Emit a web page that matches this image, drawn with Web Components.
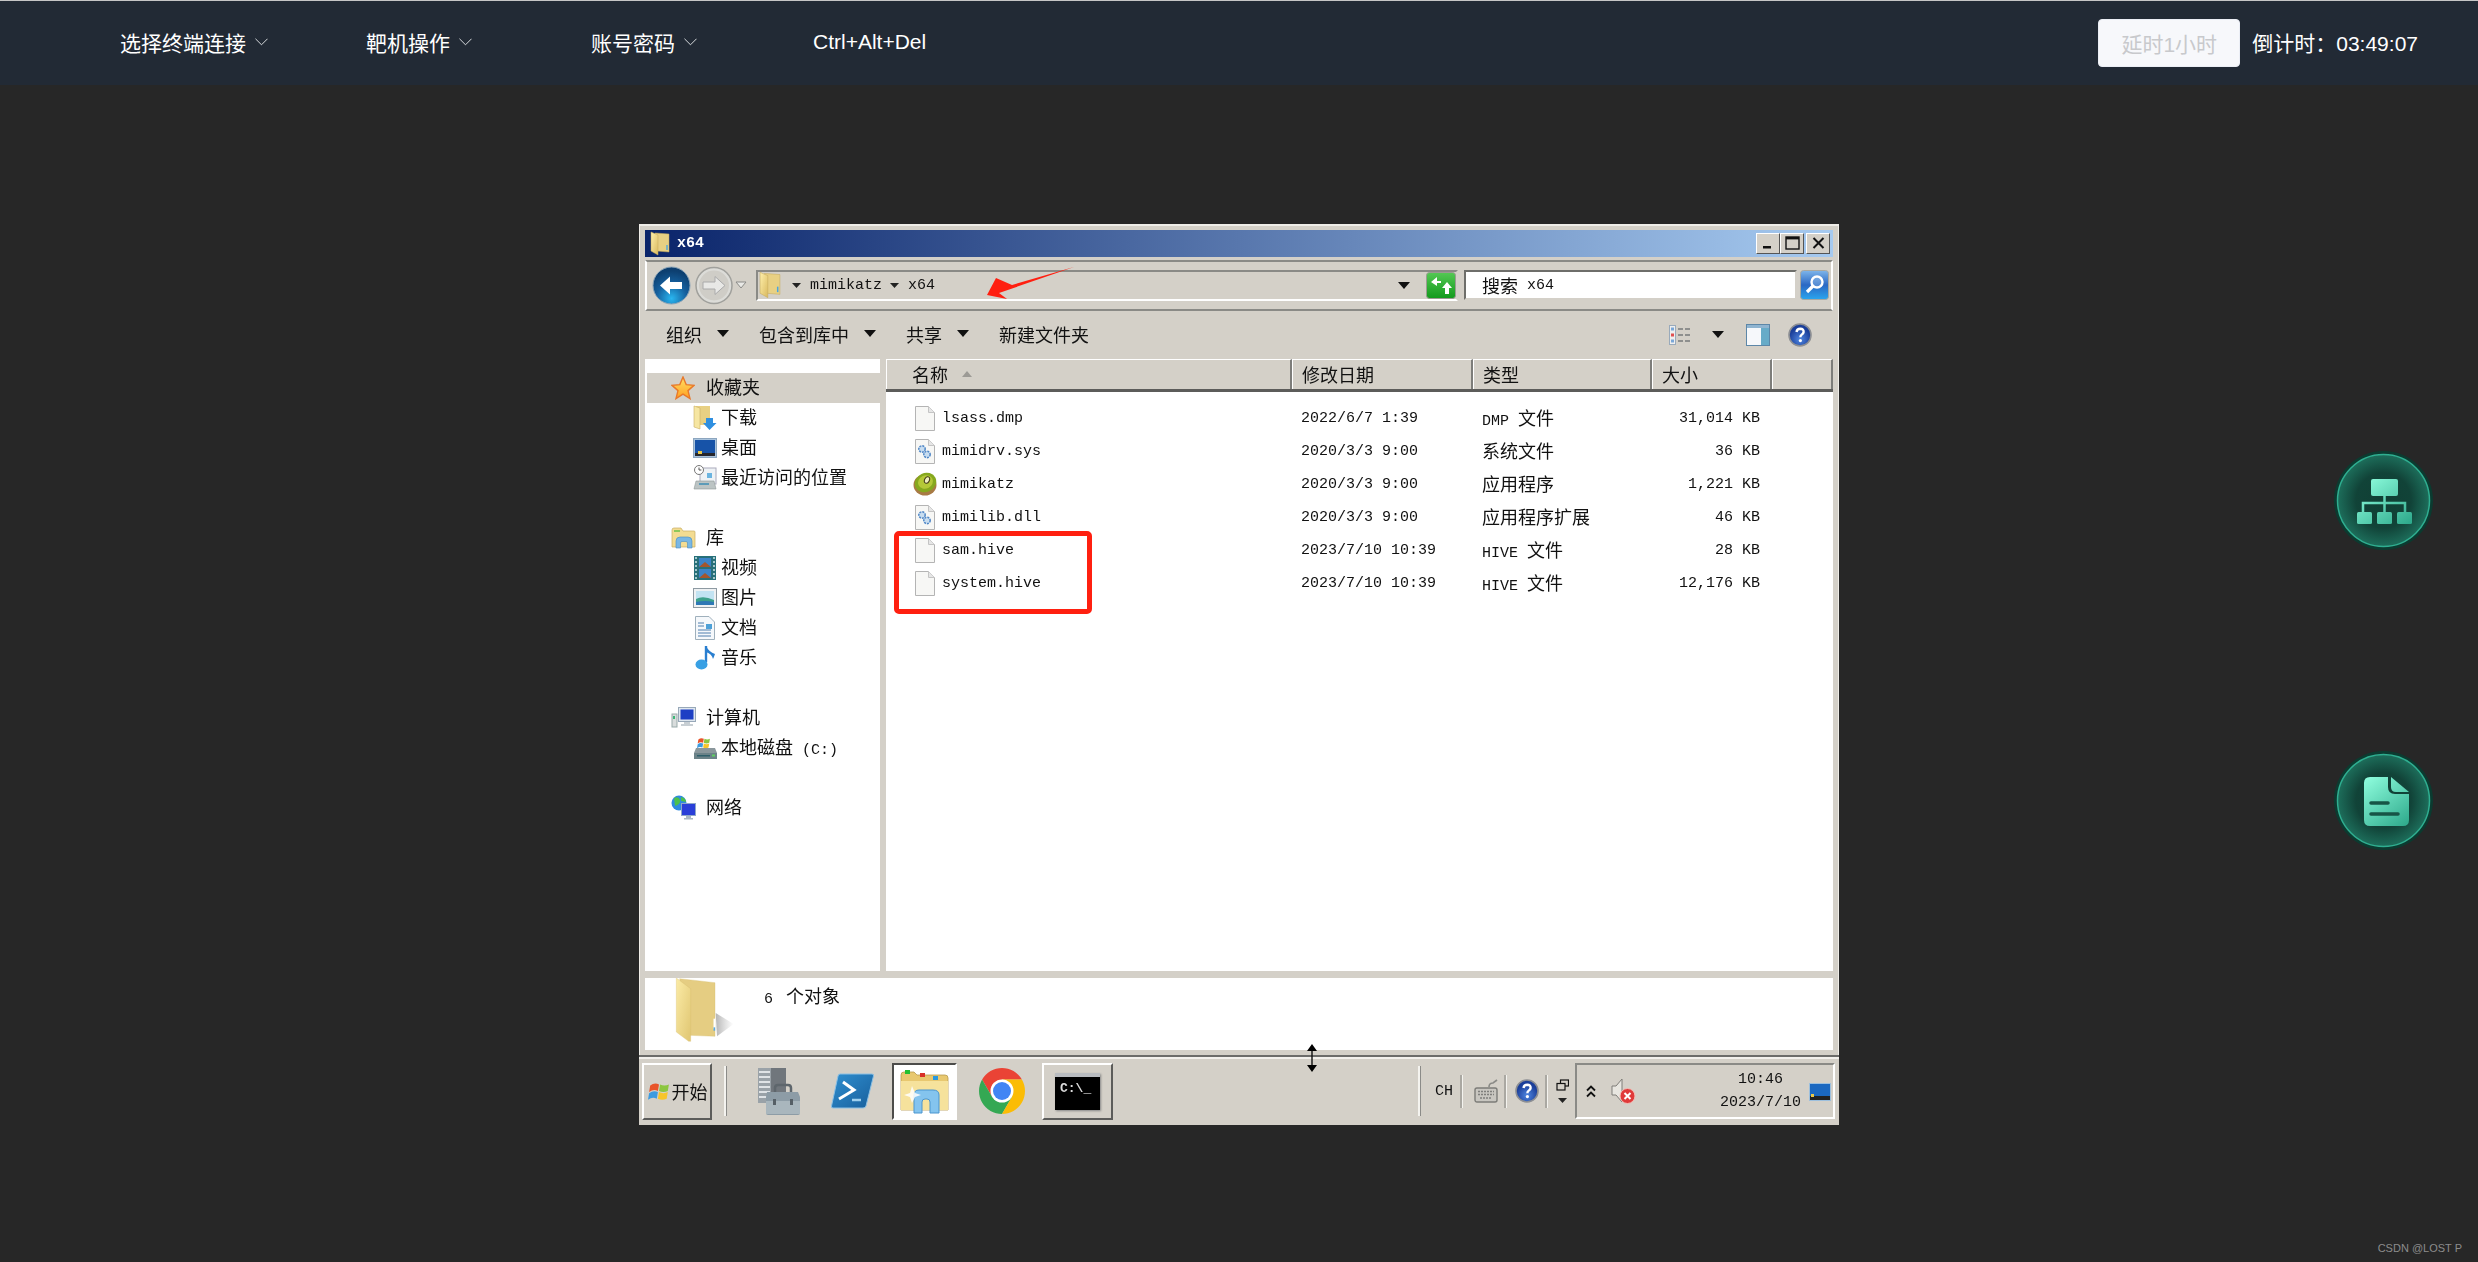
<!DOCTYPE html>
<html lang="zh">
<head>
<meta charset="utf-8">
<title>x64</title>
<style>
html, body { margin: 0; height: 100%; background: #272727; overflow: hidden; }
</style>
</head>
<body>
<lab-page></lab-page>
<script>
const FILE_PAGE = `<path d="M1.5 .5H14.5L20.5 6.5V24.5H1.5Z" fill="#f7f7f5" stroke="#b4b4b4"/><path d="M14.5 .5V6.5H20.5" fill="#e6e6e6" stroke="#c4c4c4"/>`;
const SMALL_FOLDER = `<defs><linearGradient id="fg" x1="0" x2="1" y1="0" y2="1"><stop offset="0" stop-color="#fff0ac"/><stop offset="1" stop-color="#d9b95e"/></linearGradient></defs>
	<path d="M5 2 L19 3 V21 L7 20Z" fill="#e8d083" stroke="#c7ab5c" stroke-width=".5"/>
	<path d="M1 1 L8 4 V24 L1 20Z" fill="url(#fg)" stroke="#c7ab5c" stroke-width=".5"/>
	<path d="M17 14v5" stroke="#4aa5dd" stroke-width="1.4"/>`;
const WIN_FLAG = `<path d="M2 5 Q6 2 10 4 L9 10 Q5 8 1 11Z" fill="#e8542a"/><path d="M11 4 Q15 6 19 4 L18 10 Q14 12 10 10Z" fill="#8cc63f"/><path d="M1 12 Q5 9 9 11 L8 17 Q4 15 0 18Z" fill="#3d9be0"/><path d="M10 11 Q14 13 18 11 L17 17 Q13 19 9 17Z" fill="#f8c52a"/>`;

const ICONS = {
	chevron: `<svg width="13" height="8" viewBox="0 0 14 8"><path d="M.5 .5 L7 7 L13.5 .5" fill="none" stroke="#e6e8ea" stroke-width="1"/></svg>`,
	titlefolder: `<svg width="20" height="25" viewBox="0 0 20 25">${SMALL_FOLDER}</svg>`,
	addrfolder: `<svg width="22" height="28" viewBox="0 0 20 25">${SMALL_FOLDER}</svg>`,
	back: `<svg width="39" height="39" viewBox="0 0 39 39"><defs><radialGradient id="b" cy=".85" r=".75"><stop offset="0" stop-color="#29b6f0"/><stop offset=".55" stop-color="#155f9d"/><stop offset="1" stop-color="#0d3f70"/></radialGradient></defs><circle cx="19.5" cy="19.5" r="18.5" fill="url(#b)" stroke="#8aa4b8"/><path d="M8 19.5 L18 10.5 V16 H30 V23 H18 V28.5Z" fill="#fff"/></svg>`,
	forward: `<svg width="38" height="39" viewBox="0 0 38 39"><circle cx="19" cy="19.5" r="18" fill="#dcdcd8" stroke="#a0a09c" stroke-width="1.5"/><circle cx="19" cy="19.5" r="15" fill="#cfcdc7"/><path d="M30 19.5 L20 10.5 V16 H8 V23 H20 V28.5Z" fill="#e8e8e6" stroke="#aaa"/></svg>`,
	navdrop: `<svg width="12" height="8" viewBox="0 0 12 8"><path d="M1 1H11L6 7Z" fill="#e9e9e6" stroke="#8b8b88"/></svg>`,
	arrow: `<svg width="12" height="7" viewBox="0 0 12 7"><path d="M0 0H12L6 7Z" fill="#111"/></svg>`,
	crumb: `<svg width="9" height="5" viewBox="0 0 9 5"><path d="M0 0H9L4.5 5Z" fill="#222"/></svg>`,
	sort: `<svg width="10" height="6" viewBox="0 0 10 6"><path d="M0 6H10L5 0Z" fill="#9c9a95"/></svg>`,
	refresh: `<svg width="30" height="27" viewBox="0 0 30 27"><defs><linearGradient id="g" x2="0" y2="1"><stop offset="0" stop-color="#54c854"/><stop offset="1" stop-color="#129a1c"/></linearGradient></defs><rect x=".5" y=".5" width="29" height="26" rx="3" fill="url(#g)" stroke="#9b9b92"/><path d="M11 5 L5 10 L11 14 V11 H15 V9 H11Z M19 22 V16 H16 L21 10 L26 16 H23 V22Z" fill="#fff"/></svg>`,
	search: `<svg width="29" height="30" viewBox="0 0 29 30"><defs><linearGradient id="s" x2="0" y2="1"><stop offset="0" stop-color="#7fb6ea"/><stop offset=".5" stop-color="#2a68c4"/><stop offset="1" stop-color="#2aa6ee"/></linearGradient></defs><rect x=".5" y=".5" width="28" height="29" rx="3" fill="url(#s)" stroke="#a8a8a0"/><circle cx="17" cy="12" r="5.5" fill="#bfe0f7" fill-opacity=".3" stroke="#fff" stroke-width="2.4"/><path d="M13 16 L7 22" stroke="#fff" stroke-width="3.2"/></svg>`,
	views: `<svg width="22" height="20" viewBox="0 0 22 20"><rect x=".5" y=".5" width="6" height="19" fill="#efefef" stroke="#9ab"/><rect x="2" y="2.5" width="3" height="3" fill="#7aa7d8"/><rect x="2" y="8.5" width="3" height="3" fill="#e05050"/><rect x="2" y="14.5" width="3" height="3" fill="#7aa7d8"/><path d="M9 4h5M16 4h5M9 10h5M16 10h5M9 16h5M16 16h5" stroke="#77797b" stroke-width="1.4"/></svg>`,
	pane: `<svg width="24" height="22" viewBox="0 0 24 22"><rect x=".5" y=".5" width="23" height="21" fill="#f6f8fb" stroke="#5d87a8"/><rect x="1" y="1" width="22" height="3" fill="#8fb4d0"/><rect x="15" y="4" width="8" height="17" fill="#67abc8"/></svg>`,
	help: `<svg width="24" height="24" viewBox="0 0 24 24"><defs><radialGradient id="h" cy=".7"><stop offset="0" stop-color="#4f86e0"/><stop offset="1" stop-color="#1b3f9a"/></radialGradient></defs><circle cx="12" cy="12" r="11" fill="url(#h)" stroke="#8d8f93" stroke-width="1.6"/><path d="M8.5 9 Q9 5.8 12.3 5.8 Q15.8 6 15.6 9 Q15.4 10.8 13.6 11.8 Q12.4 12.5 12.4 14.2" fill="none" stroke="#fff" stroke-width="2.4"/><circle cx="12.4" cy="17.6" r="1.6" fill="#fff"/></svg>`,
	min: `<svg width="12" height="12" viewBox="0 0 12 12"><rect x="1" y="9" width="8" height="2.5" fill="#111"/></svg>`,
	max: `<svg width="15" height="14" viewBox="0 0 15 14"><rect x="1" y="1" width="13" height="12" fill="none" stroke="#111" stroke-width="1.4"/><rect x="1" y="1" width="13" height="2.4" fill="#111"/></svg>`,
	close: `<svg width="13" height="12" viewBox="0 0 13 12"><path d="M1.5 1 L11.5 11 M11.5 1 L1.5 11" stroke="#111" stroke-width="2"/></svg>`,
	star: `<svg width="24" height="24" viewBox="0 0 24 24"><defs><linearGradient id="st" x2="0" y2="1"><stop offset="0" stop-color="#ffe066"/><stop offset="1" stop-color="#ffa020"/></linearGradient></defs><path d="M12 1 L15.2 8.6 L23 9.4 L17 14.6 L19 22.6 L12 18.2 L5 22.6 L7 14.6 L1 9.4 L8.8 8.6Z" fill="url(#st)" stroke="#e8782a" stroke-width="1.4"/></svg>`,
	download: `<svg width="24" height="25" viewBox="0 0 24 25"><path d="M3 1H17V20H3Z" fill="#e8d083"/><path d="M1 1L7 3V24L1 22Z" fill="#f6e6a2" stroke="#cbb064" stroke-width=".6"/><path d="M13 13H20V18H23.5L16.5 25L10 18H13Z" fill="#2f8fe0"/></svg>`,
	desktop: `<svg width="24" height="20" viewBox="0 0 24 20"><rect x=".5" y=".5" width="23" height="19" fill="#a9c3dd" stroke="#8da6bf"/><rect x="2" y="2" width="20" height="16" fill="#1753a8"/><rect x="2" y="15" width="20" height="3" fill="#26262c"/><rect x="5" y="13" width="4" height="3" fill="#e8c84a"/></svg>`,
	recent: `<svg width="24" height="25" viewBox="0 0 24 25"><rect x="7" y="3" width="16" height="16" fill="#eef2f5" stroke="#aab"/><rect x="14" y="8" width="5" height="5" fill="#6bb4e0"/><circle cx="6" cy="5" r="4.5" fill="#fff" stroke="#777"/><path d="M6 2.5V5H8.4" fill="none" stroke="#555"/><path d="M3 16H21L23 24H1Z" fill="#bcc4c4" stroke="#8f9898" stroke-width=".6"/><rect x="6" y="18" width="10" height="2" fill="#5c9bb8"/></svg>`,
	library: `<svg width="25" height="22" viewBox="0 0 25 22"><path d="M1 3 Q1 1 3 1H10L12 4H23Q24 4 24 5V20H1Z" fill="#f3dc92" stroke="#c8ad62" stroke-width=".7"/><rect x="3" y="3" width="6" height="2" fill="#8ec85a"/><path d="M5 21V14Q5 10 9 10H17Q21 10 21 14V21H16.5V16Q16.5 14.5 15 14.5H11Q9.5 14.5 9.5 16V21Z" fill="#79b7e4" stroke="#4a8dc1" stroke-width=".6"/></svg>`,
	video: `<svg width="22" height="24" viewBox="0 0 22 24"><rect width="22" height="24" fill="#27707a"/><path d="M1 2h2M1 6h2M1 10h2M1 14h2M1 18h2M1 22h2M19 2h2M19 6h2M19 10h2M19 14h2M19 18h2M19 22h2" stroke="#cfe5e8" stroke-width="1.6"/><rect x="5" y="2" width="12" height="9" fill="#3c83c8"/><rect x="5" y="13" width="12" height="9" fill="#3c83c8"/><path d="M5 11L11 6L17 11ZM5 22L11 17L17 22Z" fill="#a5562c"/></svg>`,
	picture: `<svg width="24" height="20" viewBox="0 0 24 20"><rect x=".5" y=".5" width="23" height="19" fill="#eef1f3" stroke="#8e9aa2"/><rect x="3" y="3" width="18" height="14" fill="#c2e3f2"/><path d="M3 11 Q10 7 21 12V17H3Z" fill="#3ea18b"/><path d="M3 14 Q12 12 21 14V17H3Z" fill="#2f78b5"/></svg>`,
	document: `<svg width="20" height="24" viewBox="0 0 20 24"><path d="M.5 .5H14L19.5 6V23.5H.5Z" fill="#f5f8fb" stroke="#9fb0bc"/><path d="M3 7h6M3 10h6M3 14h13M3 17h13M3 20h13" stroke="#4f7fae"/><rect x="11" y="8" width="6" height="5" fill="#4ea1d8"/></svg>`,
	music: `<svg width="21" height="25" viewBox="0 0 21 25"><path d="M11 1V17" stroke="#2a7fd0" stroke-width="2.4"/><path d="M11 1 Q14 7 20 9 Q19 12 18 14 Q17 9 11 7Z" fill="#2a7fd0"/><ellipse cx="6.5" cy="19.5" rx="6" ry="5" fill="#38a0e4"/></svg>`,
	computer: `<svg width="25" height="21" viewBox="0 0 25 21"><rect x="1" y="7" width="5" height="13" fill="#d8dcdc" stroke="#9aa"/><rect x="2" y="9" width="2" height="3" fill="#3cb878"/><rect x="7.5" y=".5" width="17" height="14" fill="#dfe7ef" stroke="#98a8b8"/><rect x="9.5" y="2.5" width="13" height="10" fill="#1d3fc4"/><path d="M13 15h6v2h3v2H10v-2h3Z" fill="#c8cfd4"/></svg>`,
	disk: `<svg width="25" height="24" viewBox="0 0 25 24"><g transform="translate(4 0) scale(.68)">${WIN_FLAG}</g><path d="M3 12H22L24 17V23H1V17Z" fill="#8a979c"/><rect x="1" y="17" width="23" height="6" fill="#6b8288"/><rect x="4" y="19" width="13" height="1.5" fill="#2f5f6a"/><rect x="19" y="18.5" width="3" height="2" fill="#5fd05f"/></svg>`,
	network: `<svg width="25" height="25" viewBox="0 0 25 25"><circle cx="8" cy="8" r="7.5" fill="#2f8ae0"/><path d="M3 3Q8 1 9 5T4 11ZM10 2Q15 3 15 7L10 6Z" fill="#4cc04c"/><rect x="10.5" y="8.5" width="14" height="12" fill="#2a3fd8" stroke="#8fa8c8"/><path d="M15 21h5v2h2v1.5h-9V23h2Z" fill="#aab8c4"/></svg>`,
	file: `<svg width="22" height="25" viewBox="0 0 22 25">${FILE_PAGE}</svg>`,
	sysfile: `<svg width="22" height="25" viewBox="0 0 22 25">${FILE_PAGE}<circle cx="8" cy="10" r="3.2" fill="#c8ddf0" stroke="#4f86c6" stroke-width="1.5" stroke-dasharray="2 1"/><circle cx="13" cy="15.5" r="3.2" fill="#c8ddf0" stroke="#4f86c6" stroke-width="1.5" stroke-dasharray="2 1"/></svg>`,
	kiwi: `<svg width="24" height="24" viewBox="0 0 24 24"><ellipse cx="12" cy="13" rx="11.5" ry="10.5" fill="#a87a45"/><ellipse cx="12.5" cy="10.5" rx="11" ry="9.5" transform="rotate(-25 12.5 10.5)" fill="#86a81e"/><ellipse cx="12.5" cy="10" rx="7.6" ry="6.6" transform="rotate(-25 12.5 10)" fill="#b4c838"/><ellipse cx="14" cy="8" rx="2.4" ry="3.4" transform="rotate(25 14 8)" fill="#f0efc0" stroke="#3d3418"/></svg>`,
	bigfolder: `<svg width="64" height="65" viewBox="130 60 192 195"><defs><linearGradient id="bf" x1="0" x2="1" y1="0" y2="1"><stop offset="0" stop-color="#fbeba6"/><stop offset="1" stop-color="#e0c672"/></linearGradient><linearGradient id="bs" x2="1"><stop offset="0" stop-color="#777" stop-opacity=".55"/><stop offset="1" stop-color="#999" stop-opacity="0"/></linearGradient></defs><path d="M258 165 L312 198 L262 235Z" fill="url(#bs)"/><path d="M150 62 L256 74 V235 L180 232Z" fill="#e5cd82" stroke="#d6bc6c"/><path d="M140 60 L183 92 V250 L177 250 L140 222Z" fill="url(#bf)" stroke="#d6bc6c"/><path d="M254 182v32" stroke="#fff" stroke-width="5"/><path d="M254 208v10" stroke="#5aa9df" stroke-width="5"/></svg>`,
	startflag: `<svg width="24" height="22" viewBox="0 0 20 20">${WIN_FLAG}</svg>`,
	server: `<svg width="43" height="49" viewBox="0 0 43 49"><path d="M1 1H29V36H1Z" fill="#9aa2a8"/><path d="M14 1H29V36H14Z" fill="#70767c"/><path d="M2 5h11M2 10h11M2 15h11M2 20h11M2 25h11M2 30h11" stroke="#dfe3e6" stroke-width="2"/><path d="M10 25H41L43 30V46Q43 48 41 48H11Q9 48 9 46V30Z" fill="#8d9ca6"/><path d="M9 34H43V47H9Z" fill="#a9b6bd"/><path d="M18 25 V21 Q18 18 21 18 H31 Q34 18 34 21 V25" fill="none" stroke="#5e666c" stroke-width="2.5"/><rect x="16" y="32" width="3" height="6" fill="#565f66"/><rect x="33" y="32" width="3" height="6" fill="#565f66"/></svg>`,
	powershell: `<svg width="43" height="36" viewBox="0 0 43 36"><defs><linearGradient id="p" x2="1" y2="1"><stop offset="0" stop-color="#2f8fd0"/><stop offset="1" stop-color="#185f9c"/></linearGradient></defs><path d="M9 1H41Q43 1 42.5 3L35 33Q34.5 35 32 35H2Q0 35 .5 33L7 3Q7.5 1 9 1Z" fill="url(#p)" stroke="#8cc0e4"/><path d="M12 9L23 17L8 26" fill="none" stroke="#fff" stroke-width="3"/><path d="M21 27H30" stroke="#9fd0ee" stroke-width="2.5"/></svg>`,
	explorer: `<svg width="49" height="45" viewBox="0 0 49 45"><path d="M1 6Q1 3 4 3H14L17 6H45Q48 6 48 9V41H1Z" fill="#e8c870" stroke="#b79a4e" stroke-width=".8"/><rect x="5" y="1" width="5" height="4" fill="#22c030"/><rect x="20" y="4" width="5" height="4" fill="#d83028"/><rect x="33" y="7" width="5" height="4" fill="#2898e0"/><path d="M1 12H48V41H1Z" fill="#f6e29c"/><path d="M14 44V26Q14 21 19 21H33Q39 21 39 26V44H30V33Q30 30 27 30H25Q22 30 22 33V44Z" fill="#84c4ee" stroke="#4a95cf"/><path d="M12 17L15 24L21 26L15 28L12 34L10 28L4 26L10 24Z" fill="#fff" fill-opacity=".85"/></svg>`,
	chrome: `<svg width="46" height="46" viewBox="1 1 46 46"><path d="M24 12.5H43.9A23 23 0 0 0 4.1 12.5L14 29.75Z" fill="#ea4335"/><path d="M14 29.75L4.1 12.5A23 23 0 0 0 24 47L34 29.75Z" fill="#34a853"/><path d="M34 29.75L24 47A23 23 0 0 0 43.9 12.5H24Z" fill="#fbbc05"/><circle cx="24" cy="24" r="11.5" fill="#fff"/><circle cx="24" cy="24" r="9" fill="#4285f4"/></svg>`,
	keyboard: `<svg width="24" height="24" viewBox="0 0 24 24"><path d="M15 8 Q15 4 19 4 L23 1" fill="none" stroke="#8a8a86" stroke-width="1.6"/><rect x="1" y="9" width="22" height="14" rx="2" fill="#c8c6c0" stroke="#7c7c78" stroke-width="1.4"/><path d="M4 12.500h16M4 15.500h16M6 19h12" stroke="#7f7f7c" stroke-width="1.6" stroke-dasharray="2 1"/></svg>`,
	restore: `<svg width="13" height="12" viewBox="0 0 13 12"><rect x="4.500" y="1" width="8" height="6" fill="#d4d0c8" stroke="#111" stroke-width="1.2"/><rect x="1" y="4.500" width="8" height="6.500" fill="#d4d0c8" stroke="#111" stroke-width="1.2"/></svg>`,
	trayup: `<svg width="10" height="13" viewBox="0 0 10 13"><path d="M1 5.500L5 1.500L9 5.500M1 11.500L5 7.500L9 11.500" fill="none" stroke="#111" stroke-width="1.8"/></svg>`,
	speaker: `<svg width="26" height="27" viewBox="0 0 26 27"><path d="M1 8H5L11 1V24L5 17H1Z" fill="#e8e6e0" stroke="#7f7d78"/><circle cx="16.500" cy="18" r="7.500" fill="#e03a3a" stroke="#f3c0b8"/><path d="M13.500 15L19.500 21M19.500 15L13.500 21" stroke="#fff" stroke-width="2"/></svg>`,
	showdesk: `<svg width="22" height="18" viewBox="0 0 22 18"><rect width="22" height="18" fill="#9dc0de"/><rect x="1" y="1" width="20" height="16" fill="#1b68c0"/><rect x="1" y="13" width="20" height="4" fill="#222"/><rect x="2" y="11" width="3" height="3" fill="#e8c84a"/></svg>`,
	resize: `<svg width="12" height="30" viewBox="0 0 12 30"><path d="M6 4V26" stroke="#111" stroke-width="1.4"/><path d="M1 8L6 1L11 8ZM1 22L6 29L11 22Z" fill="#000"/></svg>`,
	redarrow: `<svg width="90" height="35" viewBox="0 0 90 35"><path d="M89 1L27 19L11 12L2 29L22 33L14 27Z" fill="#ff1f10"/></svg>`,
};

class Shadowed extends HTMLElement {
	constructor() {
		super();
		this.attachShadow({ mode: "open" });
		this.shadowRoot.innerHTML = this.constructor.html || '';
	}
}

// latin runs are a bitmap-ish half width font in the remote desktop, cjk stays 18px
function mix(text) {
	return text.replace(/[\x20-\x7e]+/g, m => `<span style="font:15px 'Liberation Mono',monospace">${m}</span>`);
}

class WinIcon extends Shadowed {
	connectedCallback() {
		this.shadowRoot.innerHTML = `<style>:host{display:inline-flex;flex:none;line-height:0}</style>` + (ICONS[this.getAttribute('name')] || '');
	}
}
customElements.define('win-icon', WinIcon);

class NavItem extends Shadowed {
	static html = `<style>
:host { display: flex; align-items: center; gap: 9px; color: #fff; font: 21px "Liberation Sans", "Noto Sans CJK SC", sans-serif; white-space: nowrap; }
</style><slot></slot><win-icon name="chevron"></win-icon>`;
}
customElements.define('nav-item', NavItem);

class TopBar extends Shadowed {
	static html = `<style>
:host { display: flex; align-items: center; box-sizing: border-box; height: 85px; padding: 0 60px 2px 120px; background: #222a35; border-top: 1px solid #c6c6c6; color: #fff; font: 21px "Liberation Sans", "Noto Sans CJK SC", sans-serif; }
#menu { display: grid; grid-template-columns: 246px 225px 222px auto; align-items: center; }
#right { display: flex; align-items: center; gap: 12px; margin-left: auto; }
button { width: 142px; height: 48px; margin-top: 2px; padding: 0; border: 1px solid #ebeef5; border-radius: 4px; background: #f7f8fb; color: #c8c9cc; font: inherit; }
</style>
<div id="menu">
	<nav-item>选择终端连接</nav-item>
	<nav-item>靶机操作</nav-item>
	<nav-item>账号密码</nav-item>
	<span>Ctrl+Alt+Del</span>
</div>
<div id="right"><button disabled>延时1小时</button><span>倒计时：03:49:07</span></div>`;
}
customElements.define('top-bar', TopBar);

class TitleBar extends Shadowed {
	static html = `<style>
:host { display: flex; align-items: center; height: 27px; padding: 0 3px 0 5px; background: linear-gradient(90deg, #0a246a, #a6caf0); }
#title { margin-left: 7px; color: #fff; font: bold 15px "Liberation Mono", monospace; }
#btns { display: flex; margin-left: auto; }
.b { display: flex; align-items: center; justify-content: center; box-sizing: border-box; width: 24px; height: 21px; background: #d4d0c8; border: 1px solid; border-color: #fff #555 #555 #fff; }
.b:last-child { margin-left: 2px; }
</style>
<win-icon name="titlefolder"></win-icon><span id="title">x64</span>
<div id="btns"><div class="b"><win-icon name="min"></win-icon></div><div class="b"><win-icon name="max"></win-icon></div><div class="b"><win-icon name="close"></win-icon></div></div>`;
}
customElements.define('title-bar', TitleBar);

class AddressBar extends Shadowed {
	static html = `<style>
:host { display: flex; align-items: center; box-sizing: border-box; height: 51px; background: #d4d0c8; border: 2px solid; border-color: #8a8a86 #fff #8a8a86 #fff; font: 18px "Noto Sans CJK SC", sans-serif; color: #111; }
#cluster { display: flex; align-items: center; width: 109px; padding-left: 5px; box-sizing: border-box; }
#forward { margin-left: 4px; }
#cluster win-icon[name=navdrop] { margin-left: 2px; }
#addr { display: flex; align-items: center; box-sizing: border-box; width: 702px; height: 31px; border: 2px solid; border-color: #8a8a86 #d4d0c8 #fff #8a8a86; font: 15px "Liberation Mono", monospace; }
#addr .crumb { margin: 0 9px 0 0; }
#addr > win-icon[name=addrfolder] { margin: 0 11px 0 1px; }
#drop { margin-left: auto; margin-right: 16px; }
#search { display: flex; align-items: center; box-sizing: border-box; width: 333px; height: 30px; margin-left: 6px; padding-left: 16px; background: #fff; border: 2px solid; border-color: #6e6e6a #d4d0c8 #d4d0c8 #6e6e6a; white-space: pre; }
#sbtn { margin-left: 3px; }
</style>
<div id="cluster"><win-icon name="back"></win-icon><win-icon id="forward" name="forward"></win-icon><win-icon name="navdrop"></win-icon></div>
<div id="addr"><win-icon name="addrfolder"></win-icon><win-icon name="crumb" class="crumb"></win-icon>mimikatz<win-icon name="crumb" class="crumb" style="margin-left:8px"></win-icon>x64<win-icon id="drop" name="arrow"></win-icon><win-icon name="refresh"></win-icon></div>
<div id="search"></div><win-icon id="sbtn" name="search"></win-icon>`;
	connectedCallback() {
		this.shadowRoot.querySelector('#search').innerHTML = mix('搜索 x64');
	}
}
customElements.define('address-bar', AddressBar);

class CommandBar extends Shadowed {
	static html = `<style>
:host { display: flex; align-items: center; height: 48px; padding: 0 21px; background: #d4d0c8; color: #111; font: 18px "Noto Sans CJK SC", sans-serif; }
#cmds { display: flex; align-items: center; gap: 30px; margin-top: -2px; }
.c { display: flex; align-items: center; gap: 15px; }
#tools { display: flex; align-items: center; margin-left: auto; }
</style>
<div id="cmds">
	<div class="c">组织<win-icon name="arrow"></win-icon></div>
	<div class="c">包含到库中<win-icon name="arrow"></win-icon></div>
	<div class="c">共享<win-icon name="arrow"></win-icon></div>
	<div class="c">新建文件夹</div>
</div>
<div id="tools">
	<win-icon name="views"></win-icon>
	<win-icon name="arrow" style="margin-left:21px"></win-icon>
	<win-icon name="pane" style="margin-left:22px"></win-icon>
	<win-icon name="help" style="margin-left:18px"></win-icon>
</div>`;
}
customElements.define('command-bar', CommandBar);

class NavRow extends Shadowed {
	connectedCallback() {
		const sub = this.hasAttribute('sub');
		const on = this.hasAttribute('selected');
		this.shadowRoot.innerHTML = `<style>
:host { display: flex; align-items: center; height: 30px; box-sizing: border-box; padding-left: ${sub ? 45 : 20}px; background: ${on ? '#d4d0c8' : 'transparent'}; margin-left: 2px; }
#i { display: flex; justify-content: center; width: ${sub ? 26 : 32}px; flex: none; }
#t { margin: -3px 0 0 ${sub ? 3 : 7}px; color: #111; font: 18px "Noto Sans CJK SC", sans-serif; white-space: pre; }
</style><div id="i"><win-icon name="${this.getAttribute('icon')}"></win-icon></div><div id="t">${mix(this.getAttribute('label'))}</div>`;
	}
}
customElements.define('nav-row', NavRow);

class NavPane extends Shadowed {
	static html = `<style>
:host { display: block; box-sizing: border-box; width: 235px; padding-top: 14px; background: #fff; }
.group { margin-bottom: 30px; }
</style>
<div class="group">
	<nav-row icon="star" label="收藏夹" selected></nav-row>
	<nav-row icon="download" label="下载" sub></nav-row>
	<nav-row icon="desktop" label="桌面" sub></nav-row>
	<nav-row icon="recent" label="最近访问的位置" sub></nav-row>
</div>
<div class="group">
	<nav-row icon="library" label="库"></nav-row>
	<nav-row icon="video" label="视频" sub></nav-row>
	<nav-row icon="picture" label="图片" sub></nav-row>
	<nav-row icon="document" label="文档" sub></nav-row>
	<nav-row icon="music" label="音乐" sub></nav-row>
</div>
<div class="group">
	<nav-row icon="computer" label="计算机"></nav-row>
	<nav-row icon="disk" label="本地磁盘 (C:)" sub></nav-row>
</div>
<nav-row icon="network" label="网络"></nav-row>`;
}
customElements.define('nav-pane', NavPane);

class FileRow extends Shadowed {
	connectedCallback() {
		const a = n => this.getAttribute(n);
		this.shadowRoot.innerHTML = `<style>
:host { display: grid; grid-template-columns: 415px 181px 178px 100px; align-items: center; height: 33px; color: #111; font: 18px "Noto Sans CJK SC", sans-serif; white-space: pre; }
div { display: flex; align-items: center; }
#n { padding-left: 28px; }
#ic { justify-content: center; width: 22px; margin-right: 6px; }
#s { justify-content: flex-end; }
#k { align-items: baseline; margin-top: -2px; }
</style><div id="n"><div id="ic"><win-icon name="${a('icon')}"></win-icon></div>${mix(a('name'))}</div><div>${mix(a('date'))}</div><div id="k">${mix(a('kind'))}</div><div id="s">${mix(a('size'))}</div>`;
	}
}
customElements.define('file-row', FileRow);

class FileList extends Shadowed {
	static html = `<style>
:host { display: flex; flex-direction: column; flex: 1; background: #fff; }
#head { display: grid; grid-template-columns: 406px 181px 179px 120px 1fr; box-sizing: border-box; height: 33px; background: #d4d0c8; border-bottom: 3px solid #5c5c5a; color: #111; font: 18px "Noto Sans CJK SC", sans-serif; }
#head div { display: flex; align-items: center; gap: 14px; padding-left: 9px; border-top: 1px solid #fff; border-left: 1px solid #fff; border-right: 2px solid #7d7d7a; }
#head div:first-child { padding-left: 25px; }
#rows { padding-top: 10px; }
</style>
<div id="head">
	<div>名称<win-icon name="sort"></win-icon></div><div>修改日期</div><div>类型</div><div>大小</div><div></div>
</div>
<div id="rows">
	<file-row icon="file" name="lsass.dmp" date="2022/6/7 1:39" kind="DMP 文件" size="31,014 KB"></file-row>
	<file-row icon="sysfile" name="mimidrv.sys" date="2020/3/3 9:00" kind="系统文件" size="36 KB"></file-row>
	<file-row icon="kiwi" name="mimikatz" date="2020/3/3 9:00" kind="应用程序" size="1,221 KB"></file-row>
	<file-row icon="sysfile" name="mimilib.dll" date="2020/3/3 9:00" kind="应用程序扩展" size="46 KB"></file-row>
	<file-row icon="file" name="sam.hive" date="2023/7/10 10:39" kind="HIVE 文件" size="28 KB"></file-row>
	<file-row icon="file" name="system.hive" date="2023/7/10 10:39" kind="HIVE 文件" size="12,176 KB"></file-row>
</div>`;
}
customElements.define('file-list', FileList);

class DetailsPane extends Shadowed {
	static html = `<style>
:host { display: flex; height: 72px; padding-left: 28px; background: #fff; color: #111; font: 18px "Noto Sans CJK SC", sans-serif; }
#t { margin-left: 27px; padding-top: 4px; line-height: 26px; white-space: pre; }
#t b { font-weight: 400; margin-left: 4px; }
</style><win-icon name="bigfolder"></win-icon><div id="t"><span style="font:15px 'Liberation Mono',monospace">6 </span><b>个对象</b></div>`;
}
customElements.define('details-pane', DetailsPane);

class ExplorerWindow extends Shadowed {
	static html = `<style>
:host { display: flex; flex-direction: column; box-sizing: border-box; height: 833px; padding: 6px 6px 5px; background: #d4d0c8; border-bottom: 2px solid #6c6c6a; box-shadow: inset 0 1px 0 1px #efede8; }
address-bar { margin-top: 3px; }
#panes { display: flex; gap: 6px; height: 614px; }
details-pane { margin-top: 7px; }
</style>
<title-bar></title-bar>
<address-bar></address-bar>
<command-bar></command-bar>
<div id="panes"><nav-pane></nav-pane><file-list></file-list></div>
<details-pane></details-pane>`;
}
customElements.define('explorer-window', ExplorerWindow);

class TaskBar extends Shadowed {
	static html = `<style>
:host { display: flex; align-items: center; box-sizing: border-box; height: 68px; padding: 2px 4px 4px 3px; background: #d4d0c8; border-top: 2px solid #f2f0ec; color: #111; font: 18px "Noto Sans CJK SC", sans-serif; }
.raised { display: flex; align-items: center; justify-content: center; box-sizing: border-box; height: 57px; background: #d4d0c8; border: 2px solid; border-color: #fff #5c5c5a #5c5c5a #fff; }
#start { width: 70px; gap: 1px; }
.sep { flex: none; width: 3px; height: 50px; background: #f4f3ef; border-right: 1px solid #8b8b88; box-sizing: border-box; }
#active { display: flex; align-items: center; justify-content: center; box-sizing: border-box; width: 65px; height: 57px; background: #fff; border: 2px solid; border-color: #4c4c4a #fff #fff #4c4c4a; }
#tile { box-sizing: border-box; width: 45px; height: 37px; padding: 6px 0 0 5px; background: linear-gradient(#b9bcc0 4px, #000 4px); color: #ddd; font: bold 13px/20px "Liberation Mono", monospace; box-shadow: 1px 1px 2px #888; white-space: pre; }
#tray { display: flex; align-items: center; box-sizing: border-box; width: 260px; height: 56px; margin-left: 6px; padding-left: 9px; border: 2px solid; border-color: #8a8a86 #fff #fff #8a8a86; }
#clock { margin-left: auto; text-align: center; font: 15px/23px "Liberation Mono", monospace; }
.thin { flex: none; width: 2px; height: 33px; background: #aaa8a2; border-right: 1px solid #f4f3ef; }
.m { font: 15px "Liberation Mono", monospace; }
#ime { display: flex; align-items: center; margin-left: auto; }
#ime2 { display: flex; flex-direction: column; align-items: center; gap: 7px; margin-left: 8px; }
</style>
<div id="start" class="raised"><win-icon name="startflag"></win-icon>开始</div>
<div class="sep" style="margin-left:12px"></div>
<win-icon name="server" style="margin-left:30px"></win-icon>
<win-icon name="powershell" style="margin-left:31px"></win-icon>
<div id="active" style="margin-left:18px"><win-icon name="explorer"></win-icon></div>
<win-icon name="chrome" style="margin-left:22px"></win-icon>
<div class="raised" style="width:71px;margin-left:17px"><div id="tile">C:\\_</div></div>
<div id="ime">
	<div class="sep"></div>
	<span class="m" style="margin:0 7px 0 14px">CH</span>
	<div class="thin"></div>
	<win-icon name="keyboard" style="margin:0 6px 0 11px"></win-icon>
	<div class="thin"></div>
	<win-icon name="help" style="margin:0 6px 0 8px"></win-icon>
	<div class="thin"></div>
	<div id="ime2"><win-icon name="restore"></win-icon><win-icon name="crumb"></win-icon></div>
	<div id="tray">
		<win-icon name="trayup"></win-icon>
		<win-icon name="speaker" style="margin-left:15px"></win-icon>
		<div id="clock">10:46<br>2023/7/10</div>
		<win-icon name="showdesk" style="margin:2px 2px 0 8px"></win-icon>
	</div>
</div>`;
}
customElements.define('task-bar', TaskBar);

class RemoteScreen extends Shadowed {
	static html = `<style>
:host { display: block; position: relative; box-sizing: border-box; width: 1200px; height: 901px; background: #d4d0c8; }
#blur { filter: blur(.45px); }
#mark { position: absolute; left: 255px; top: 307px; box-sizing: border-box; width: 198px; height: 83px; border: 5px solid #ff2010; border-radius: 5px; }
#arrow { position: absolute; left: 346px; top: 42px; }
#cursor { position: absolute; left: 667px; top: 819px; }
</style>
<div id="blur"><explorer-window></explorer-window><task-bar></task-bar></div>
<div id="mark"></div>
<win-icon id="arrow" name="redarrow"></win-icon>
<win-icon id="cursor" name="resize"></win-icon>`;
}
customElements.define('remote-screen', RemoteScreen);

class FloatButton extends Shadowed {
	connectedCallback() {
		const tree = `<rect x="37" y="28" width="27" height="17" rx="2" fill="url(#c)"/><path d="M50.500 45V61M29 61V52H71V61" fill="none" stroke="url(#c)" stroke-width="2.500"/><rect x="23" y="61" width="15" height="12" rx="1.500" fill="url(#c)"/><rect x="43" y="61" width="15" height="12" rx="1.500" fill="url(#c)"/><rect x="63" y="61" width="15" height="12" rx="1.500" fill="url(#c)"/>`;
		const doc = `<path d="M36 26H54V36Q54 43 61 43H75V69Q75 75 69 75H36Q30 75 30 69V32Q30 26 36 26Z" fill="url(#c)"/><path d="M57 26L75 41H62Q57 41 57 36Z" fill="url(#c)"/><path d="M37 52H54M37 63H64" stroke="#175446" stroke-width="3.500" stroke-linecap="round"/>`;
		this.shadowRoot.innerHTML = `<style>
:host { position: absolute; right: 45px; display: block; width: 99px; height: 99px; line-height: 0; }
</style><svg width="99" height="99" viewBox="0 0 99 99"><defs>
<radialGradient id="r"><stop offset="0" stop-color="#103f34"/><stop offset=".6" stop-color="#114338"/><stop offset="1" stop-color="#1d6e5b"/></radialGradient>
<linearGradient id="c" gradientUnits="userSpaceOnUse" x1="30" y1="26" x2="70" y2="78"><stop offset="0" stop-color="#90ffdf"/><stop offset="1" stop-color="#2da98b"/></linearGradient>
</defs><circle cx="49.500" cy="49.500" r="49.500" fill="#0b3b30"/><circle cx="49.500" cy="49.500" r="46" fill="url(#r)" stroke="#2fae90" stroke-width="1.500"/>${this.getAttribute('kind') === 'doc' ? doc : tree}</svg>`;
	}
}
customElements.define('float-button', FloatButton);

class LabPage extends Shadowed {
	static html = `<style>
:host { display: block; position: relative; height: 1262px; background: #272727; overflow: hidden; }
main { display: flex; justify-content: center; padding-top: 139px; }
#a { top: 451px; }
#b { top: 751px; }
#wm { position: absolute; right: 16px; bottom: 8px; color: #8c8c8c; font: 11px "Liberation Sans", sans-serif; }
</style>
<top-bar></top-bar>
<main><remote-screen></remote-screen></main>
<float-button id="a" kind="tree"></float-button>
<float-button id="b" kind="doc"></float-button>
<div id="wm">CSDN @LOST P</div>`;
}
customElements.define('lab-page', LabPage);
</script>
</body>
</html>
